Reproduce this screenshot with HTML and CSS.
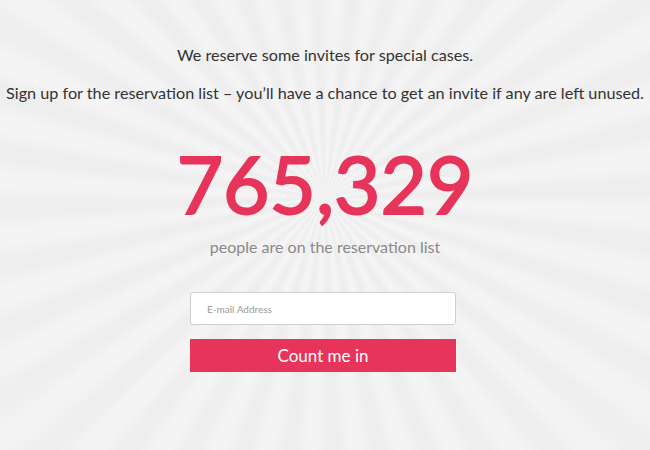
FILE: index.html
```html
<!DOCTYPE html>
<html>
<head>
<meta charset="utf-8">
<link rel="stylesheet" href="styles.css">
</head>
<body>
<main class="page">
  <p class="lead">We reserve some invites for special cases.</p>
  <p class="lead lead-2">Sign up for the reservation list – you’ll have a chance to get an invite if any are left unused.</p>
  <div class="count">765,329</div>
  <p class="caption">people are on the reservation list</p>
  <form class="signup">
    <input class="email" type="text" placeholder="E-mail Address">
    <button class="btn" type="button">Count me in</button>
  </form>
</main>
</body>
</html>
```
FILE: styles.css
```css
html, body {
  margin: 0;
  height: 100%;
}
body {
  font-family: Lato, "Open Sans", sans-serif;
  background-color: #efefef;
  background-image: repeating-conic-gradient(from 2deg at 50% 44%,
    #f4f4f4 0deg, #f4f4f4 2deg, #eeeeee 5deg, #eeeeee 7deg, #f4f4f4 10deg);
  overflow: hidden;
}
.page {
  display: flex;
  flex-direction: column;
  align-items: center;
  padding-top: 44px;
}
.lead {
  margin: 0;
  font-size: 16.2px;
  line-height: 22px;
  color: #333;
  white-space: nowrap;
}
.lead-2 {
  margin-top: 16px;
}
.count {
  margin-top: 32px;
  font-size: 80px;
  line-height: 94px;
  color: #e6345a;
  -webkit-text-stroke: 2px #e6345a;
}
.caption {
  margin: 0;
  margin-top: 6px;
  font-size: 16px;
  line-height: 22px;
  color: #8a8a8a;
}
.signup {
  display: flex;
  flex-direction: column;
  gap: 14px;
  width: 266px;
  margin-top: 34px;
  margin-right: 4px;
}
.email {
  box-sizing: border-box;
  height: 33px;
  width: 100%;
  border: 1px solid #cfcfcf;
  border-radius: 3px;
  background: #fff;
  padding: 0 16px;
  font-family: Lato, sans-serif;
  font-size: 10px;
  color: #333;
  outline: none;
}
.email::placeholder {
  color: #9a9a9a;
}
.btn {
  height: 33px;
  width: 100%;
  border: 0;
  background: #e6345a;
  color: #fff;
  font-family: Lato, sans-serif;
  font-size: 17px;
  padding: 0;
  cursor: pointer;
}
```
